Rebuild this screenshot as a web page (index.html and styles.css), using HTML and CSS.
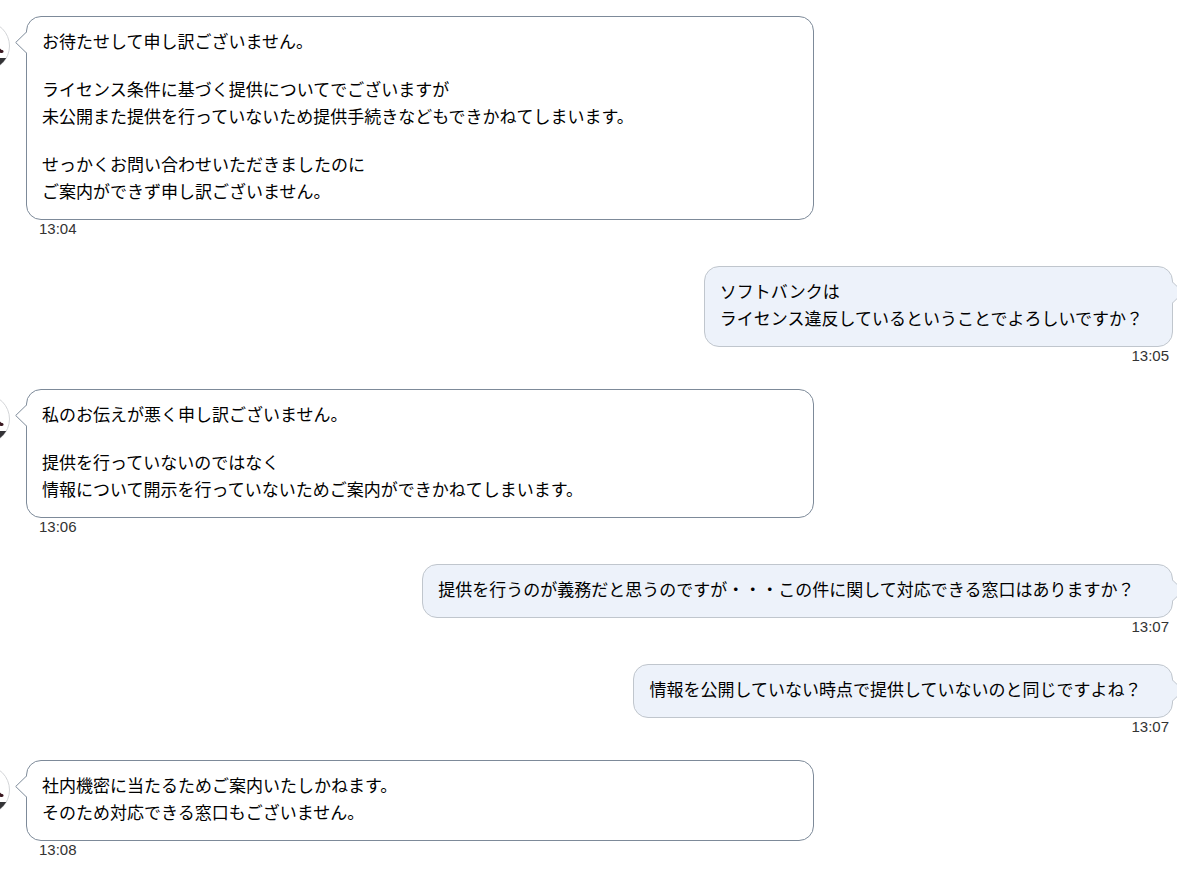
FILE: index.html
```html
<!DOCTYPE html>
<html lang="ja">
<head>
<meta charset="utf-8">
<title>チャット</title>
<link rel="stylesheet" href="styles.css">
</head>
<body>
<svg class="defs" aria-hidden="true">
  <symbol id="avatar" viewBox="0 0 50 50">
    <circle cx="25" cy="25" r="24.5" fill="#fff" stroke="#d3d5d8"/>
    <path d="M36 28L40 27.5Q41 29 43 29.2Q44.5 31.5 42 32Q39 32 36 30.5Z" fill="#3a1820"/>
    <path d="M36 37H46.2A24 24 0 0 1 36 46.5Z" fill="#333336"/>
  </symbol>
  <symbol id="tail" viewBox="0 0 12 23">
    <path d="M12 0.5L0.7 11.5L12 22.5" fill="var(--fill)" stroke="var(--line)"/>
  </symbol>
</svg>
<main class="chat">
  <article class="message message-in">
    <svg class="avatar" aria-hidden="true"><use href="#avatar"/></svg>
    <div class="bubble">
      <svg class="tail" aria-hidden="true"><use href="#tail"/></svg>
      <p>お待たせして申し訳ございません。</p>
      <p>ライセンス条件に基づく提供についてでございますが<br>未公開また提供を行っていないため提供手続きなどもできかねてしまいます。</p>
      <p>せっかくお問い合わせいただきましたのに<br>ご案内ができず申し訳ございません。</p>
    </div>
    <time class="time">13:04</time>
  </article>
  <article class="message message-out">
    <div class="bubble bubble-small">
      <svg class="tail" aria-hidden="true"><use href="#tail"/></svg>
      <p>ソフトバンクは<br>ライセンス違反しているということでよろしいですか？</p>
    </div>
    <time class="time">13:05</time>
  </article>
  <article class="message message-in">
    <svg class="avatar" aria-hidden="true"><use href="#avatar"/></svg>
    <div class="bubble">
      <svg class="tail" aria-hidden="true"><use href="#tail"/></svg>
      <p>私のお伝えが悪く申し訳ございません。</p>
      <p>提供を行っていないのではなく<br>情報について開示を行っていないためご案内ができかねてしまいます。</p>
    </div>
    <time class="time">13:06</time>
  </article>
  <article class="message message-out">
    <div class="bubble bubble-large">
      <svg class="tail" aria-hidden="true"><use href="#tail"/></svg>
      <p>提供を行うのが義務だと思うのですが・・・この件に関して対応できる窓口はありますか？</p>
    </div>
    <time class="time">13:07</time>
  </article>
  <article class="message message-out">
    <div class="bubble bubble-medium">
      <svg class="tail" aria-hidden="true"><use href="#tail"/></svg>
      <p>情報を公開していない時点で提供していないのと同じですよね？</p>
    </div>
    <time class="time">13:07</time>
  </article>
  <article class="message message-in">
    <svg class="avatar" aria-hidden="true"><use href="#avatar"/></svg>
    <div class="bubble">
      <svg class="tail" aria-hidden="true"><use href="#tail"/></svg>
      <p>社内機密に当たるためご案内いたしかねます。<br>そのため対応できる窓口もございません。</p>
    </div>
    <time class="time">13:08</time>
  </article>
</main>
</body>
</html>
```

FILE: styles.css
```css
* { box-sizing: border-box; }

body {
  margin: 0;
  background: #fff;
  color: #000;
  font: 17px/27px "Noto Sans CJK JP", sans-serif;
  overflow-x: hidden;
}

.defs {
  position: absolute;
  width: 0;
  height: 0;
}

.chat {
  display: flex;
  flex-direction: column;
  padding: 16px 4px 0 0;
}

.message {
  position: relative;
  display: flex;
  flex-direction: column;
}

.message + .message-in { margin-top: 24px; }
.message + .message-out { margin-top: 28px; }

.message-in {
  --line: #7d8a99;
  --fill: #fff;
  align-items: flex-start;
  padding-left: 26px;
}

.message-out {
  --line: #c0c6cd;
  --fill: #edf2fa;
  align-items: flex-end;
}

.bubble {
  position: relative;
  padding: 10px 15px 15px;
  border: 1px solid var(--line);
  border-radius: 15px;
  background: var(--fill);
}

.message-in .bubble { width: 788px; max-width: 100%; }
.bubble-small { min-width: 40%; }
.bubble-medium { min-width: 46%; }
.bubble-large { min-width: 64%; }

.bubble p { margin: 0; }
.bubble p + p { margin-top: 21px; }

.tail {
  position: absolute;
  top: 14px;
  left: -12px;
  width: 12px;
  height: 23px;
}

.message-out .tail {
  left: auto;
  right: -12px;
  transform: scaleX(-1);
}

.avatar {
  position: absolute;
  top: 5px;
  left: -40px;
  width: 50px;
  height: 50px;
}

.time {
  padding: 0 4px 0 13px;
  color: #333;
  font: 15px/18px "Liberation Sans", Arial, sans-serif;
}
```
